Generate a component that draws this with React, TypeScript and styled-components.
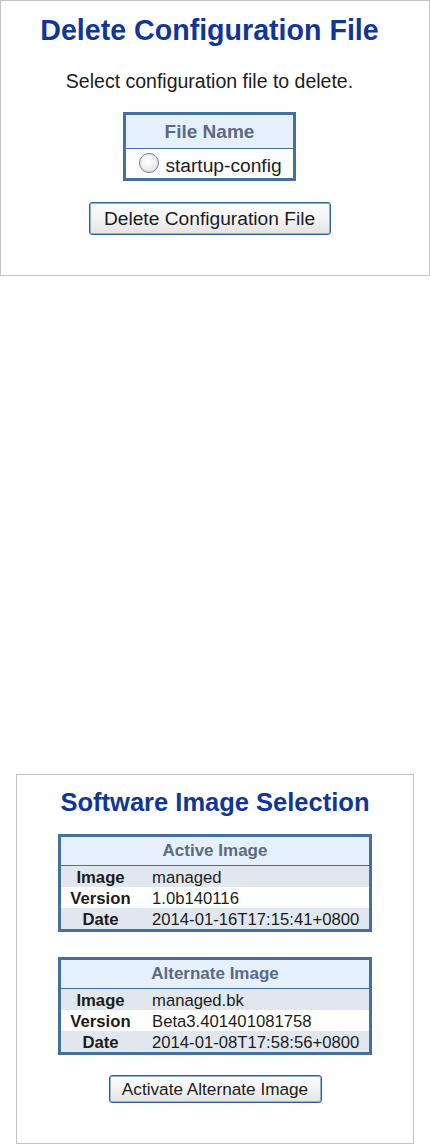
import React from "react";
import styled, { createGlobalStyle } from "styled-components";

const GlobalStyle = createGlobalStyle`
  html, body { margin: 0; padding: 0; background: #ffffff; }
  body { font-family: "Liberation Sans", Arial, sans-serif; color: #1c1c1c; }
  * { box-sizing: border-box; }
`;

const Page = styled.div`
  width: 430px;
  height: 1144px;
  display: flex;
  flex-direction: column;
  align-items: flex-start;
  overflow: hidden;
`;

const Panel = styled.section<{ $w: number; $h: number; $mt: number; $ml: number; $pt: number; $pr: number }>`
  width: ${(p) => p.$w}px;
  height: ${(p) => p.$h}px;
  margin-top: ${(p) => p.$mt}px;
  margin-left: ${(p) => p.$ml}px;
  padding-top: ${(p) => p.$pt}px;
  padding-right: ${(p) => p.$pr}px;
  border: 1px solid #c3c3c3;
  background: #ffffff;
  display: flex;
  flex-direction: column;
  align-items: center;
`;

const Title = styled.h1<{ $size: number; $lh: number; $mb: number }>`
  margin: 0 0 ${(p) => p.$mb}px 0;
  font-size: ${(p) => p.$size}px;
  line-height: ${(p) => p.$lh}px;
  font-weight: bold;
  color: #10369a;
  white-space: nowrap;
`;

const Lead = styled.p`
  margin: 0 0 19px 0;
  font-size: 19.5px;
  line-height: 24px;
  color: #1c1c1c;
  white-space: nowrap;
`;

const FileTable = styled.div`
  width: 173px;
  border: 3px solid #44709f;
  display: flex;
  flex-direction: column;
  margin-bottom: 21px;
`;

const FileHead = styled.div`
  height: 34px;
  border-bottom: 1px solid #44709f;
  background: #e6f0fd;
  color: #5c6a82;
  font-weight: bold;
  font-size: 19px;
  line-height: 33px;
  text-align: center;
`;

const FileRow = styled.label`
  height: 29px;
  padding-top: 4px;
  padding-left: 2px;
  display: flex;
  align-items: flex-start;
  justify-content: center;
  gap: 6px;
  font-size: 19.2px;
  background: #ffffff;
`;

const Radio = styled.input`
  appearance: none;
  -webkit-appearance: none;
  margin: 0;
  width: 20px;
  height: 20px;
  border-radius: 50%;
  border: 1.5px solid #6b7f98;
  background: radial-gradient(circle at 45% 40%, #ffffff 0%, #f0f0f0 45%, #cfd3d8 100%);
  flex: none;
`;

const FileText = styled.span`
  line-height: 24px;
  margin-top: 1px;
  white-space: nowrap;
`;

const Button = styled.button<{ $w: number; $h: number; $size: number }>`
  width: ${(p) => p.$w}px;
  height: ${(p) => p.$h}px;
  padding: 0;
  margin: 0;
  font-family: "Liberation Sans", Arial, sans-serif;
  font-size: ${(p) => p.$size}px;
  color: #1c1c1c;
  border: 1px solid #2f5f97;
  border-radius: 3px;
  box-shadow: inset 0 0 0 1px #8fb1da;
  background: linear-gradient(#fdfdfd 0%, #f3f3f3 50%, #e3e3e3 100%);
  white-space: nowrap;
  cursor: pointer;
`;

const InfoTable = styled.div<{ $mb: number }>`
  width: 314px;
  border: 3px solid #44709f;
  margin-bottom: ${(p) => p.$mb}px;
  display: flex;
  flex-direction: column;
`;

const InfoHead = styled.div`
  height: 29px;
  border-bottom: 1px solid #44709f;
  background: #e6f0fd;
  color: #5c6a82;
  font-weight: bold;
  font-size: 17px;
  line-height: 28px;
  text-align: center;
`;

const InfoRow = styled.div<{ $alt: boolean }>`
  height: 21px;
  display: grid;
  grid-template-columns: 79px 1fr;
  background: ${(p) => (p.$alt ? "#e1e7ef" : "#ffffff")};
  font-size: 16.7px;
`;

const Label = styled.div`
  padding-top: 2px;
  line-height: 19px;
  font-weight: bold;
  text-align: center;
  color: #1c1c1c;
  white-space: nowrap;
`;

const Value = styled.div`
  padding-top: 2px;
  padding-left: 12px;
  line-height: 19px;
  color: #1c1c1c;
  white-space: nowrap;
`;

type Info = { title: string; rows: [string, string][] };

const tables: Info[] = [
  {
    title: "Active Image",
    rows: [
      ["Image", "managed"],
      ["Version", "1.0b140116"],
      ["Date", "2014-01-16T17:15:41+0800"],
    ],
  },
  {
    title: "Alternate Image",
    rows: [
      ["Image", "managed.bk"],
      ["Version", "Beta3.401401081758"],
      ["Date", "2014-01-08T17:58:56+0800"],
    ],
  },
];

export default function App() {
  return (
    <>
      <GlobalStyle />
      <Page>
        <Panel $w={430} $h={276} $mt={0} $ml={0} $pt={12} $pr={11}>
          <Title $size={28.6} $lh={34} $mb={22}>
            Delete Configuration File
          </Title>
          <Lead>Select configuration file to delete.</Lead>
          <FileTable>
            <FileHead>File Name</FileHead>
            <FileRow>
              <Radio type="radio" name="file" />
              <FileText>startup-config</FileText>
            </FileRow>
          </FileTable>
          <Button $w={242} $h={33} $size={19.2}>
            Delete Configuration File
          </Button>
        </Panel>
        <Panel $w={398} $h={370} $mt={498} $ml={16} $pt={12} $pr={0}>
          <Title $size={25.5} $lh={30} $mb={17}>
            Software Image Selection
          </Title>
          {tables.map((t, i) => (
            <InfoTable key={t.title} $mb={i === 0 ? 25 : 20}>
              <InfoHead>{t.title}</InfoHead>
              {t.rows.map(([k, v], j) => (
                <InfoRow key={k} $alt={j % 2 === 0}>
                  <Label>{k}</Label>
                  <Value>{v}</Value>
                </InfoRow>
              ))}
            </InfoTable>
          ))}
          <Button $w={213} $h={28} $size={17.2}>
            Activate Alternate Image
          </Button>
        </Panel>
      </Page>
    </>
  );
}
